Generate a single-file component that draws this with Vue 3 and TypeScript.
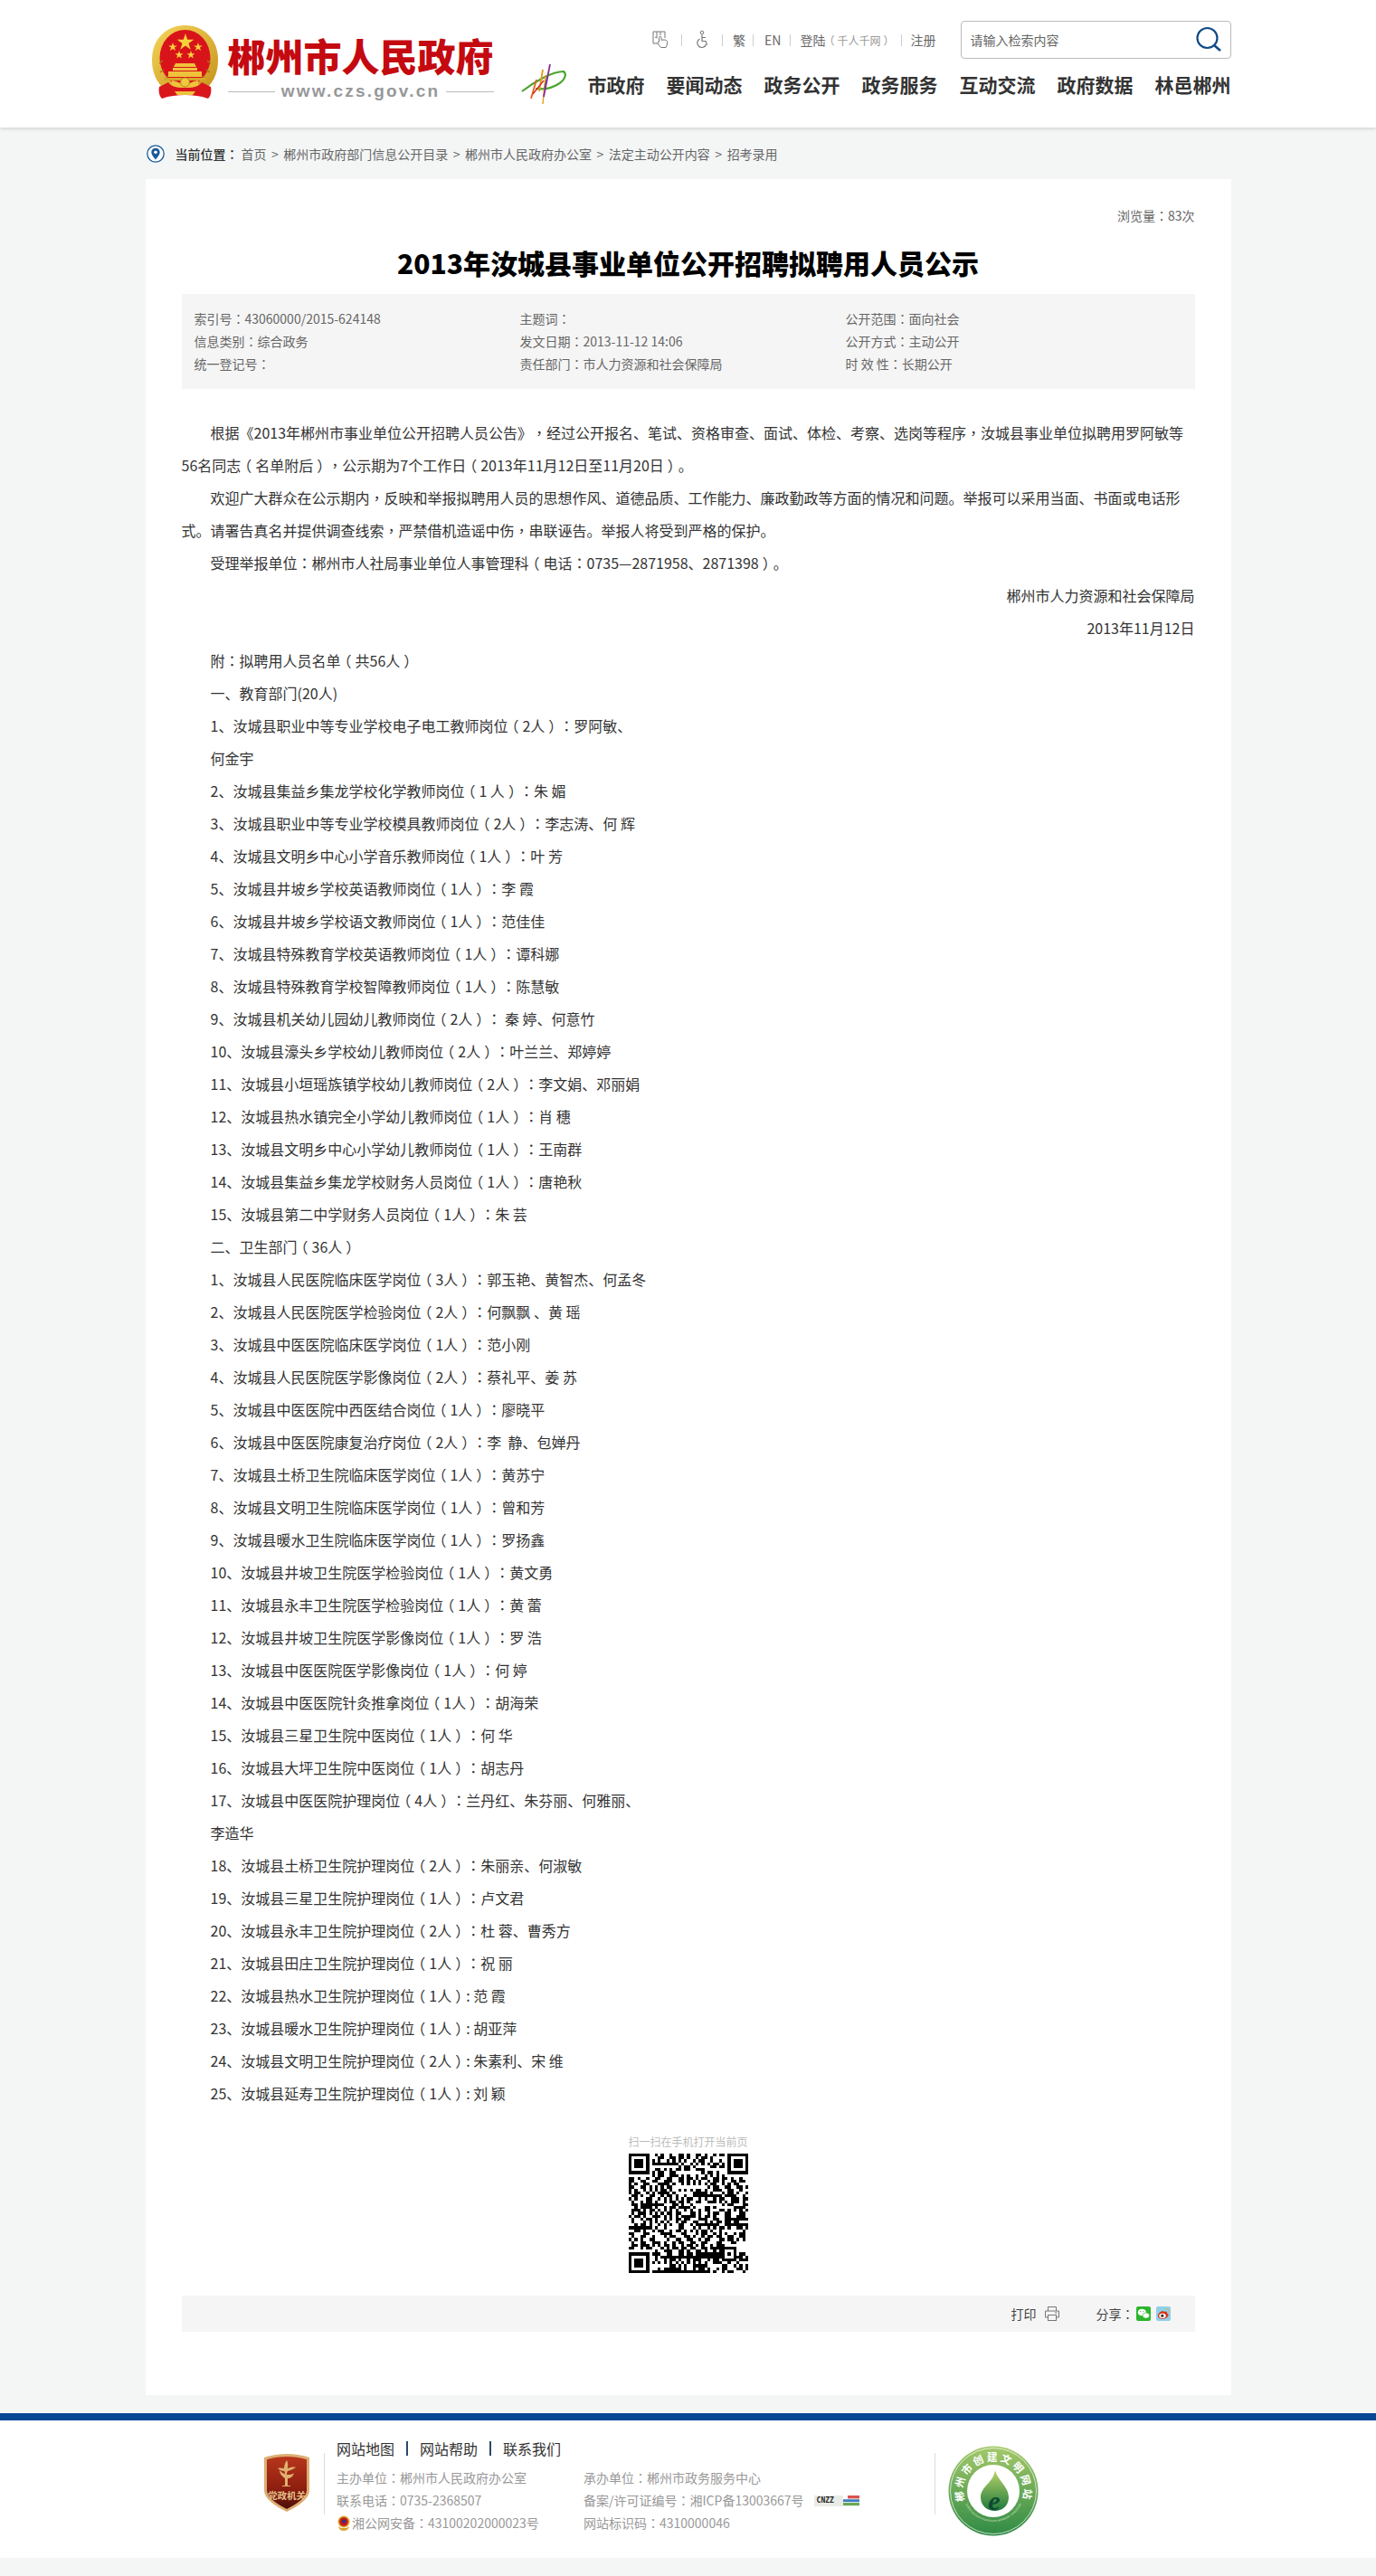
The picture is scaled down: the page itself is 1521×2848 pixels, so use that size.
<script setup lang="ts">
import { h } from 'vue';
import type { FunctionalComponent } from 'vue';

// The reference centres ：，（） in the em box. Colon and comma take the TC glyph form,
// the brackets are nudged towards the middle of their box.
const PUNCT_CLASS: Record<string, string> = { '：': 'pn', '，': 'pn', '（': 'pl', '）': 'pr' };
const T = (({ s }: { s: string }) =>
  s
    .split(/([：，（）])/)
    .filter(Boolean)
    .map((p) => (PUNCT_CLASS[p] ? h('span', { class: PUNCT_CLASS[p] }, p) : p))) as unknown as FunctionalComponent<{ s: string }>;

const crumbs = ['首页', '郴州市政府部门信息公开目录', '郴州市人民政府办公室', '法定主动公开内容', '招考录用'];
const navItems = ['市政府', '要闻动态', '政务公开', '政务服务', '互动交流', '政府数据', '林邑郴州'];

const meta = [
  '索引号：43060000/2015-624148', '主题词：', '公开范围：面向社会',
  '信息类别：综合政务', '发文日期：2013-11-12 14:06', '公开方式：主动公开',
  '统一登记号：', '责任部门：市人力资源和社会保障局', '时 效 性：长期公开',
];

const paragraphs = [
  '根据《2013年郴州市事业单位公开招聘人员公告》，经过公开报名、笔试、资格审查、面试、体检、考察、选岗等程序，汝城县事业单位拟聘用罗阿敏等56名同志（名单附后），公示期为7个工作日（2013年11月12日至11月20日）。',
  '欢迎广大群众在公示期内，反映和举报拟聘用人员的思想作风、道德品质、工作能力、廉政勤政等方面的情况和问题。举报可以采用当面、书面或电话形式。请署告真名并提供调查线索，严禁借机造谣中伤，串联诬告。举报人将受到严格的保护。',
  '受理举报单位：郴州市人社局事业单位人事管理科（电话：0735—2871958、2871398）。',
];

const signature = ['郴州市人力资源和社会保障局', '2013年11月12日'];

const list = [
  '附：拟聘用人员名单（共56人）',
  '一、教育部门(20人)',
  '1、汝城县职业中等专业学校电子电工教师岗位（2人）：罗阿敏、',
  '何金宇',
  '2、汝城县集益乡集龙学校化学教师岗位（1 人）：朱 媚',
  '3、汝城县职业中等专业学校模具教师岗位（2人）：李志涛、何 辉',
  '4、汝城县文明乡中心小学音乐教师岗位（1人）：叶 芳',
  '5、汝城县井坡乡学校英语教师岗位（1人）：李 霞',
  '6、汝城县井坡乡学校语文教师岗位（1人）：范佳佳',
  '7、汝城县特殊教育学校英语教师岗位（1人）：谭科娜',
  '8、汝城县特殊教育学校智障教师岗位（1人）：陈慧敏',
  '9、汝城县机关幼儿园幼儿教师岗位（2人）：\u00a0秦 婷、何意竹',
  '10、汝城县濠头乡学校幼儿教师岗位（2人）：叶兰兰、郑婷婷',
  '11、汝城县小垣瑶族镇学校幼儿教师岗位（2人）：李文娟、邓丽娟',
  '12、汝城县热水镇完全小学幼儿教师岗位（1人）：肖 穗',
  '13、汝城县文明乡中心小学幼儿教师岗位（1人）：王南群',
  '14、汝城县集益乡集龙学校财务人员岗位（1人）：唐艳秋',
  '15、汝城县第二中学财务人员岗位（1人）：朱 芸',
  '二、卫生部门（36人）',
  '1、汝城县人民医院临床医学岗位（3人）：郭玉艳、黄智杰、何孟冬',
  '2、汝城县人民医院医学检验岗位（2人）：何飘飘 、黄 瑶',
  '3、汝城县中医医院临床医学岗位（1人）：范小刚',
  '4、汝城县人民医院医学影像岗位（2人）：蔡礼平、姜 苏',
  '5、汝城县中医医院中西医结合岗位（1人）：廖晓平',
  '6、汝城县中医医院康复治疗岗位（2人）：李\u00a0 静、包婵丹',
  '7、汝城县土桥卫生院临床医学岗位（1人）：黄苏宁',
  '8、汝城县文明卫生院临床医学岗位（1人）：曾和芳',
  '9、汝城县暖水卫生院临床医学岗位（1人）：罗扬鑫',
  '10、汝城县井坡卫生院医学检验岗位（1人）：黄文勇',
  '11、汝城县永丰卫生院医学检验岗位（1人）：黄 蕾',
  '12、汝城县井坡卫生院医学影像岗位（1人）：罗 浩',
  '13、汝城县中医医院医学影像岗位（1人）：何 婷',
  '14、汝城县中医医院针灸推拿岗位（1人）：胡海荣',
  '15、汝城县三星卫生院中医岗位（1人）：何 华',
  '16、汝城县大坪卫生院中医岗位（1人）：胡志丹',
  '17、汝城县中医医院护理岗位（4人）：兰丹红、朱芬丽、何雅丽、',
  '李造华',
  '18、汝城县土桥卫生院护理岗位（2人）：朱丽亲、何淑敏',
  '19、汝城县三星卫生院护理岗位（1人）：卢文君',
  '20、汝城县永丰卫生院护理岗位（2人）：杜 蓉、曹秀方',
  '21、汝城县田庄卫生院护理岗位（1人）：祝 丽',
  '22、汝城县热水卫生院护理岗位（1人）: 范 霞',
  '23、汝城县暖水卫生院护理岗位（1人）: 胡亚萍',
  '24、汝城县文明卫生院护理岗位（2人）: 朱素利、宋 维',
  '25、汝城县延寿卫生院护理岗位（1人）: 刘 颖',
];

// QR look-alike: finder and alignment squares are fixed, the data modules come from a small LCG.
const QR_SIZE = 41;
function buildQr(): string {
  let seed = 20131112;
  const rnd = () => {
    seed = (seed * 1103515245 + 12345) & 0x7fffffff;
    return (seed >> 12) & 1;
  };
  const inFinder = (x: number, y: number) =>
    (x < 8 && y < 8) || (x >= QR_SIZE - 8 && y < 8) || (x < 8 && y >= QR_SIZE - 8);
  let d = '';
  const rect = (x: number, y: number, w: number, ht: number) => {
    d += `M${x} ${y}h${w}v${ht}h${-w}z`;
  };
  for (let y = 0; y < QR_SIZE; y++) {
    for (let x = 0; x < QR_SIZE; x++) {
      const inAlign = x >= 32 && x <= 36 && y >= 32 && y <= 36;
      if (rnd() && !inFinder(x, y) && !inAlign) rect(x, y, 1, 1);
    }
  }
  for (const [fx, fy] of [[0, 0], [QR_SIZE - 7, 0], [0, QR_SIZE - 7]]) {
    rect(fx, fy, 7, 1);
    rect(fx, fy + 6, 7, 1);
    rect(fx, fy + 1, 1, 5);
    rect(fx + 6, fy + 1, 1, 5);
    rect(fx + 2, fy + 2, 3, 3);
  }
  rect(32, 32, 5, 1);
  rect(32, 36, 5, 1);
  rect(32, 33, 1, 3);
  rect(36, 33, 1, 3);
  rect(34, 34, 1, 1);
  return d;
}
const qrPath = buildQr();
</script>

<template>
  <header class="top">
    <div class="top-inner">
      <div class="brand">
        <svg class="emblem" viewBox="0 0 75 83" width="75" height="83" aria-hidden="true">
          <defs>
            <linearGradient id="gold" x1="0" y1="0" x2="1" y2="1">
              <stop offset="0" stop-color="#f6d65a" />
              <stop offset="1" stop-color="#c8941e" />
            </linearGradient>
          </defs>
          <path d="M37.5 0C58 0 74 15 74 38c0 13-4 22-10 29H11C5 60 1 51 1 38 1 15 17 0 37.5 0z" fill="url(#gold)" />
          <ellipse cx="37.5" cy="36" rx="28" ry="31" fill="#d8141a" />
          <path d="M9 42l4-3M10 52l4-3M15 60l4-4M66 42l-4-3M65 52l-4-3M60 60l-4-4" stroke="#a9761a" stroke-width="1.5" />
          <polygon points="38,9 40.200,15.800 47.300,15.800 41.500,20 43.700,26.800 38,22.600 32.300,26.800 34.500,20 28.700,15.800 35.800,15.800" fill="#f8d23c" />
          <polygon points="24,19 25.200,22.400 28.800,22.400 25.900,24.600 27,28 24,25.900 21,28 22.100,24.600 19.200,22.400 22.800,22.400" fill="#f8d23c" />
          <polygon points="52,19 53.200,22.400 56.800,22.400 53.900,24.600 55,28 52,25.900 49,28 50.100,24.600 47.200,22.400 50.800,22.400" fill="#f8d23c" />
          <polygon points="31,28 32.100,31.200 35.500,31.200 32.800,33.200 33.800,36.500 31,34.500 28.200,36.500 29.200,33.200 26.500,31.200 29.900,31.200" fill="#f8d23c" />
          <polygon points="44,28 45.100,31.200 48.500,31.200 45.800,33.200 46.800,36.500 44,34.500 41.200,36.500 42.200,33.200 39.500,31.200 42.900,31.200" fill="#f8d23c" />
          <path d="M27 42h21l2 4H25zM24 47h27v3H24zM19 51h37v6H19z" fill="#efc23c" />
          <path d="M15 58h45l1 3H14z" fill="#d9a52a" />
          <path d="M26 70c-4-3-4-6-3-9l5 1c4 3 15 3 19 0l5-1c1 3 1 6-3 9z" fill="#efc23c" />
          <circle cx="37.500" cy="63" r="5" fill="#f1c93f" stroke="#b9841e" />
          <path d="M9 68l10-5c3 4 7 6 18.500 6S53 67 56 63l10 5c1 5 0 10-3 13-8-3-17-4-25.500-4S20 78 12 81c-3-3-4-8-3-13z" fill="#d9161c" />
          <path d="M26 73h23l-3 4H29z" fill="#efc23c" />
        </svg>
        <div class="brand-text">
          <div class="brand-name">郴州市人民政府</div>
          <div class="brand-url"><span class="brand-line"></span><span>www.czs.gov.cn</span><span class="brand-line"></span></div>
        </div>
      </div>

      <div class="top-right">
        <div class="tools">
          <svg class="tool-icon" viewBox="0 0 18 20" width="18" height="20" aria-hidden="true">
            <path d="M6 14H1V1h13v7M5 1v7l-2-1M9 1v4" fill="none" stroke="#777" stroke-width="1" />
            <path d="M7.500 7.500c0-1.500 2.500-1.500 2.500 0v3c2-1 6-.5 6.500 1 .3 2-.3 5-1.500 7H9.500L6 14c-.5-1 .5-2 1.500-1.500z" fill="#fff" stroke="#777" stroke-width="1" />
          </svg>
          <i class="sep"></i>
          <svg class="tool-icon" viewBox="0 0 16 22" width="16" height="22" aria-hidden="true">
            <circle cx="8" cy="3" r="1.800" fill="none" stroke="#777" />
            <path d="M8 5.500v7h4l1.500 4M8 8.500h4" fill="none" stroke="#777" stroke-width="1.200" />
            <path d="M5.500 10a5 5 0 1 0 7 6" fill="none" stroke="#777" stroke-width="1.200" />
          </svg>
          <i class="sep sep-before"></i>
          <a>繁</a>
          <i class="sep sep-after"></i>
          <a>EN</a>
          <i class="sep sep-sm"></i>
          <a>登陆</a>
          <span class="tool-note"><T s="（千人千网）" /></span>
          <i class="sep sep-sm"></i>
          <a>注册</a>
          <div class="search">
            <span>请输入检索内容</span>
            <svg viewBox="0 0 30 30" width="30" height="30" aria-hidden="true">
              <circle cx="13.500" cy="13" r="11" fill="none" stroke="#0e4a86" stroke-width="2.200" />
              <path d="M21 21l7 6" stroke="#0e4a86" stroke-width="2.600" />
            </svg>
          </div>
        </div>
        <nav class="nav">
          <svg class="nav-mark" viewBox="0 0 50 44" width="50" height="44" aria-hidden="true">
            <path d="M1 30C14 20 34 8 47 8c4 3 1 10-6 14-8 5-18 6-25 5" fill="none" stroke="#4aa52b" stroke-width="2.200" />
            <path d="M24 44l3-32" stroke="#e8a020" stroke-width="1.400" />
            <path d="M11 38l6-21" stroke="#e8601a" stroke-width="1.800" />
            <path d="M20 30l4-24" stroke="#e09b1c" stroke-width="1.800" />
            <path d="M26 28l3-14" stroke="#2b5da8" stroke-width="1.600" />
            <path d="M25 18l-12 15" stroke="#d62b1e" stroke-width="1.400" />
            <path d="M25 36l7-36" stroke="#8a2e8e" stroke-width="1.800" />
          </svg>
          <a v-for="item in navItems" :key="item">{{ item }}</a>
        </nav>
      </div>
    </div>
  </header>

  <div class="crumb">
    <svg viewBox="0 0 20 20" width="20" height="20" aria-hidden="true">
      <circle cx="10" cy="10" r="9.200" fill="#fff" stroke="#1b5a9a" stroke-width="1.300" />
      <path d="M10 3.800c-2.800 0-4.700 2-4.700 4.500C5.300 11.500 10 16.500 10 16.500s4.700-5 4.700-8.200c0-2.500-1.900-4.500-4.700-4.500z" fill="#1b5a9a" />
      <circle cx="10" cy="8.300" r="1.800" fill="#fff" />
    </svg>
    <b><T s="当前位置：" /></b>
    <template v-for="(c, i) in crumbs" :key="c">
      <i v-if="i">&gt;</i><a>{{ c }}</a>
    </template>
  </div>

  <main class="card">
    <div class="views"><T s="浏览量：83次" /></div>
    <h1>2013年汝城县事业单位公开招聘拟聘用人员公示</h1>
    <div class="meta">
      <div v-for="m in meta" :key="m"><T :s="m" /></div>
    </div>

    <article class="body">
      <p v-for="p in paragraphs" :key="p"><T :s="p" /></p>
      <p v-for="s in signature" :key="s" class="right">{{ s }}</p>
      <p v-for="line in list" :key="line"><T :s="line" /></p>
    </article>

    <div class="qr">
      <div class="qr-label">扫一扫在手机打开当前页</div>
      <svg viewBox="0 0 41 41" width="132" height="132" shape-rendering="crispEdges" aria-hidden="true">
        <path :d="qrPath" fill="#000" />
      </svg>
    </div>

    <div class="actions">
      <span>打印</span>
      <svg class="print" viewBox="0 0 18 18" width="18" height="18" aria-hidden="true">
        <path d="M4.500 6V1.500h9V6M4.500 13H1.500V6h15v7h-3" fill="none" stroke="#777" />
        <rect x="4.500" y="10.500" width="9" height="6" fill="none" stroke="#777" />
        <path d="M12 8h2.500" stroke="#777" />
      </svg>
      <span class="share"><T s="分享：" /></span>
      <svg viewBox="0 0 16 16" width="16" height="16" aria-hidden="true">
        <rect width="16" height="16" rx="2" fill="#2bb52a" />
        <ellipse cx="6.300" cy="6.500" rx="4.600" ry="3.800" fill="#fff" />
        <ellipse cx="10.800" cy="10" rx="3.800" ry="3.100" fill="#fff" stroke="#2bb52a" stroke-width=".6" />
        <circle cx="4.800" cy="5.500" r=".6" fill="#2bb52a" />
        <circle cx="7.800" cy="5.500" r=".6" fill="#2bb52a" />
      </svg>
      <svg class="weibo" viewBox="0 0 16 16" width="16" height="16" aria-hidden="true">
        <rect width="16" height="16" rx="2" fill="#8fd0e8" />
        <path d="M7 5C3.500 6 1.500 9 2 11c.6 2.500 4 3.200 7 2.400 3-.8 5-2.800 4.500-4.500-.3-1-1.300-1.300-1.600-1.500.5-1.400-.5-2.400-2.500-1.600C8.500 6.200 8.500 4.700 7 5z" fill="#d9361c" />
        <ellipse cx="7" cy="10.300" rx="3.700" ry="2.600" fill="#fff" />
        <circle cx="6.800" cy="10.300" r="1.500" fill="#222" />
        <path d="M11 2.500c2 0 3.500 1.500 3 4" fill="none" stroke="#e0b23a" />
      </svg>
    </div>
  </main>

  <footer class="foot">
    <div class="foot-inner">
      <svg class="badge" viewBox="0 0 52 64" width="52" height="64">
        <defs>
          <linearGradient id="shield" x1="0" y1="0" x2="0" y2="1">
            <stop offset="0" stop-color="#b8361c" />
            <stop offset=".6" stop-color="#8e1f10" />
            <stop offset="1" stop-color="#4a0f08" />
          </linearGradient>
        </defs>
        <path d="M26 0c8 0 17 1.500 25 4v36c0 10-13 18-25 24C14 58 1 50 1 40V4C9 1.500 18 0 26 0z" fill="#dcae72" />
        <path d="M26 3c7 0 15 1 22 3.200V40c0 8-11 15.500-22 21C15 55.500 4 48 4 40V6.200C11 4 19 3 26 3z" fill="url(#shield)" />
        <path d="M26 7c2 4 1 7 1 9 3-1 6-2 9-1-3 2-6 3-9 4-1 2-1 3-1 4 3 0 6 0 8-2-1 4-4 6-7 6v8h3v1h-9v-1h3v-8c-3-2-6-5-6-9 2 2 4 4 6 4 0-2 0-2-1-3-2 0-5-1-7-3 3-1 5 0 7 0 0-3 1-6 3-9z" fill="#e0b070" />
        <text x="26" y="50" text-anchor="middle" class="badge-text">党政机关</text>
      </svg>
      <i class="foot-sep"></i>
      <div class="foot-text">
        <div class="foot-links">
          <a>网站地图</a><i></i><a>网站帮助</a><i></i><a>联系我们</a>
        </div>
        <div class="foot-grid">
          <div><T s="主办单位：郴州市人民政府办公室" /></div>
          <div><T s="承办单位：郴州市政务服务中心" /></div>
          <div><T s="联系电话：0735-2368507" /></div>
          <div class="with-icon">
            <span><T s="备案/许可证编号：湘ICP备13003667号" /></span>
            <span class="cnzz"><b>CNZZ</b><svg viewBox="0 0 18 13" width="18" height="11" aria-hidden="true" preserveAspectRatio="none"><rect width="18" height="13" fill="#fff" /><rect x="5" width="13" height="4" fill="#d9534f" /><rect y="5" width="18" height="3.500" fill="#3f7fc1" /><rect y="9.500" width="18" height="3.500" fill="#6aa84f" /></svg></span>
          </div>
          <div class="with-police">
            <svg viewBox="0 0 16 18" width="16" height="18" aria-hidden="true">
              <circle cx="8" cy="7" r="6.500" fill="#d9a52a" />
              <circle cx="8" cy="7" r="4.800" fill="#c8161c" />
              <circle cx="8" cy="6.500" r="2" fill="#1c3f8f" />
              <path d="M2 12c1 4 3 5 6 5s5-1 6-5l-3 2H5z" fill="#d9a52a" />
            </svg>
            <span><T s="湘公网安备：43100202000023号" /></span>
          </div>
          <div><T s="网站标识码：4310000046" /></div>
        </div>
      </div>
      <i class="foot-sep"></i>
      <svg class="civil" viewBox="0 0 100 100" width="100" height="100">
        <defs>
          <linearGradient id="ring" x1="0" y1="0" x2="0" y2="1">
            <stop offset="0" stop-color="#a5c96a" />
            <stop offset="1" stop-color="#2f8a45" />
          </linearGradient>
          <linearGradient id="leaf" x1="0" y1="0" x2="0" y2="1">
            <stop offset="0" stop-color="#b9d36a" />
            <stop offset="1" stop-color="#1f7a3c" />
          </linearGradient>
          <path id="arc-top" d="M50 83.500a33.500 33.500 0 0 1 0-67a33.500 33.500 0 0 1 0 67" />
          <path id="arc-low" d="M16 50a34 34 0 0 0 68 0" />
        </defs>
        <circle cx="50" cy="50" r="49.500" fill="url(#ring)" />
        <circle cx="50" cy="50" r="47.500" fill="none" stroke="#fff" stroke-width=".7" />
        <circle cx="50" cy="50" r="29" fill="#fff" />
        <text class="civil-top"><textPath href="#arc-top" startOffset="50%" text-anchor="middle">郴州市创建文明网站</textPath></text>
        <text class="civil-low"><textPath href="#arc-low" startOffset="50%" text-anchor="middle">CHENZHOUSHI CHUANGJIAN WENMING WANGZHAN</textPath></text>
        <path d="M52 27c3 12 15 18 15 30 0 10-8 15-15 15-9 0-16-6-16-15 0-12 14-16 16-30z" fill="url(#leaf)" />
        <text x="51" y="71" class="civil-e">e</text>
      </svg>
    </div>
  </footer>
</template>

<style scoped>
.top {
  height: 141px;
  background: #fff;
  box-shadow: 0 1px 4px rgba(0, 0, 0, 0.18);
  position: relative;
}
.top-inner {
  width: 1200px;
  margin: 0 auto;
  display: flex;
  justify-content: space-between;
}
.brand {
  display: flex;
  padding: 28px 0 0 6px;
  gap: 10px;
}
.brand-text {
  width: 294px;
}
.brand-name {
  font-size: 42px;
  font-weight: 900;
  line-height: 44px;
  height: 44px;
  margin-top: 11px;
  color: #c40a10;
  white-space: nowrap;
}
.brand-url {
  display: flex;
  align-items: center;
  gap: 7px;
  margin-top: 6px;
  font: 700 19px/24px "Liberation Sans", sans-serif;
  letter-spacing: 2.2px;
  color: #96989a;
  white-space: nowrap;
}
.brand-line {
  flex: 1;
  height: 1px;
  background: #bbb;
}
.top-right {
  width: 785px;
}
.tools {
  display: flex;
  align-items: center;
  justify-content: flex-end;
  height: 42px;
  margin-top: 23px;
  font-size: 14px;
  color: #666;
}
.tool-icon {
  flex: none;
}
.sep {
  width: 1px;
  height: 13px;
  background: #ccc;
  margin: 0 14px;
}
.sep-before {
  margin: 0 11px 0 14px;
}
.sep-after {
  margin: 0 12px 0 8px;
}
.sep-sm {
  margin: 0 10px;
}
.tool-note {
  margin-left: 1px;
  font-size: 12px;
  color: #999;
  white-space: nowrap;
}
.search {
  flex: none;
  width: 299px;
  height: 42px;
  box-sizing: border-box;
  margin-left: 27px;
  padding: 0 9px 0 10px;
  display: flex;
  align-items: center;
  justify-content: space-between;
  border: 1px solid #bbb;
  border-radius: 4px;
  color: #666;
}
.nav {
  display: flex;
  align-items: center;
  justify-content: space-between;
  margin-top: 6px;
  height: 44px;
  font-size: 21px;
  font-weight: 700;
  color: #333;
  white-space: nowrap;
}
.crumb {
  height: 57px;
  width: 1200px;
  margin: 0 auto;
  display: flex;
  align-items: center;
  font-size: 14px;
  color: #666;
}
.crumb svg {
  flex: none;
  margin: 1px 12px 0 1px;
}
.crumb b {
  font-weight: 500;
  color: #333;
  margin-right: 3px;
}
.crumb i {
  font-style: normal;
  margin: 0 5.500px;
}
.card {
  box-sizing: border-box;
  width: 1200px;
  margin: 0 auto;
  padding: 28px 40px 70px;
  background: #fff;
}
.views {
  text-align: right;
  font-size: 14px;
  line-height: 24px;
  color: #666;
}
h1 {
  margin: 15px 0 0;
  font-size: 30px;
  font-weight: 900;
  line-height: 50px;
  text-align: center;
  color: #000;
}
.meta {
  box-sizing: border-box;
  height: 105px;
  margin-top: 10px;
  padding: 15px 0 0 14px;
  display: grid;
  grid-template-columns: 360px 360px 1fr;
  grid-auto-rows: 25px;
  background: #f5f5f5;
  font-size: 14px;
  line-height: 25px;
  color: #666;
}
.body {
  margin-top: 30px;
  font-size: 16px;
  line-height: 36px;
  color: #333;
}
.body p {
  margin: 0;
  text-indent: 2em;
}
.body p.right {
  text-align: right;
}
.qr {
  margin-top: 26px;
  display: flex;
  flex-direction: column;
  align-items: center;
}
.qr-label {
  font-size: 12px;
  line-height: 20px;
  color: #bbb;
  white-space: nowrap;
  margin-bottom: 3px;
}
.qr svg {
  display: block;
}
.actions {
  height: 40px;
  margin-top: 25px;
  padding-right: 27px;
  display: flex;
  align-items: center;
  justify-content: flex-end;
  background: #f5f5f5;
  font-size: 14px;
  color: #444;
}
.print {
  margin-left: 8px;
}
.share {
  margin-left: 40px;
  margin-right: 2px;
}
.weibo {
  margin-left: 6px;
}
.foot {
  margin-top: 20px;
  margin-bottom: 20px;
  height: 160px;
  box-sizing: border-box;
  border-top: 8px solid #084794;
  background: #fff;
}
.foot-inner {
  display: flex;
  align-items: flex-start;
  padding-left: 291px;
}
.badge {
  flex: none;
  margin-top: 37px;
}
.badge-text {
  font-size: 10.500px;
  font-weight: 700;
  fill: #e8c088;
}
.foot-sep {
  flex: none;
  width: 1px;
  height: 68px;
  margin-top: 36px;
  background: #ddd;
}
.badge + .foot-sep {
  margin-left: 15px;
}
.foot-text {
  width: 674px;
  padding: 19px 0 0 13px;
  box-sizing: border-box;
}
.foot-links {
  display: flex;
  align-items: center;
  height: 24px;
  font-size: 16px;
  color: #333;
}
.foot-links i {
  width: 2px;
  height: 16px;
  margin: 0 13px;
  background: #2b4a6b;
}
.foot-grid {
  margin-top: 8px;
  display: grid;
  grid-template-columns: 273px 1fr;
  grid-auto-rows: 25px;
  font-size: 14px;
  line-height: 25px;
  color: #999;
  white-space: nowrap;
}
.with-icon {
  display: flex;
  align-items: center;
}
.cnzz {
  display: inline-flex;
  align-items: center;
  justify-content: space-between;
  box-sizing: border-box;
  width: 50px;
  height: 12px;
  margin-left: 11px;
  padding: 0 0 0 3px;
  background: #e9ebe6;
  font: 700 8px/12px "DejaVu Sans Mono", monospace;
  color: #222;
}
.with-police {
  display: flex;
  align-items: center;
  gap: 1px;
}
.civil {
  flex: none;
  margin: 28px 0 0 14px;
}
.civil-top {
  font-size: 11.500px;
  font-weight: 700;
  fill: #fff;
  letter-spacing: 2.700px;
}
.civil-low {
  font: 3px "Liberation Sans", sans-serif;
  fill: #d8e8c8;
}
.civil-e {
  font: italic 700 30px "Liberation Serif", serif;
  text-anchor: middle;
  fill: #0e4a32;
}
a {
  color: inherit;
}
</style>

<style>
body {
  background: #f4f6f6;
  font-family: "Noto Sans CJK SC", "Liberation Sans", sans-serif;
  text-spacing-trim: space-all;
}
.pn {
  font-family: "Noto Sans CJK TC", sans-serif;
}
.pl {
  position: relative;
  left: -0.25em;
}
.pr {
  position: relative;
  left: 0.25em;
}
</style>
